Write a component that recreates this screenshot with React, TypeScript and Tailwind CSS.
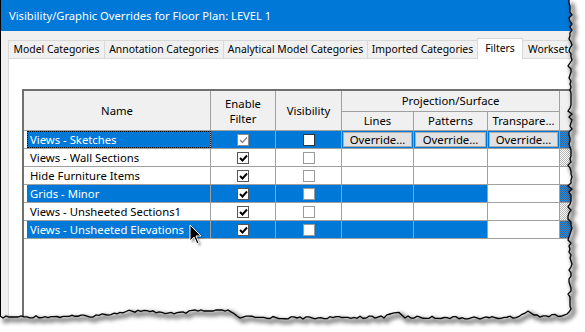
import React from "react";

type Row = {
  name: string;
  sel: boolean;
  dim?: boolean;
  buttons?: boolean;
  tail: "blue" | "gray" | "plain";
};

const ROWS: Row[] = [
  { name: "Views - Sketches", sel: true, dim: true, buttons: true, tail: "blue" },
  { name: "Views - Wall Sections", sel: false, tail: "gray" },
  { name: "Hide Furniture Items", sel: false, tail: "plain" },
  { name: "Grids - Minor", sel: true, tail: "blue" },
  { name: "Views - Unsheeted Sections1", sel: false, tail: "gray" },
  { name: "Views - Unsheeted Elevations", sel: true, tail: "blue" },
];

const TABS = [
  { label: "Model Categories", w: "w-[96px]" },
  { label: "Annotation Categories", w: "w-[119px]" },
  { label: "Analytical Model Categories", w: "w-[144px]" },
  { label: "Imported Categories", w: "w-[110px]" },
];

function noise(i: number) {
  const s = Math.sin(i * 12.9898) * 43758.5453;
  return s - Math.floor(s);
}

function lerp(ctrl: [number, number][], x: number) {
  for (let i = 0; i < ctrl.length - 1; i++) {
    const [x0, y0] = ctrl[i];
    const [x1, y1] = ctrl[i + 1];
    if (x >= x0 && x <= x1) return y0 + ((y1 - y0) * (x - x0)) / (x1 - x0);
  }
  return ctrl[ctrl.length - 1][1];
}

// torn paper outline along the bottom and right edge
function tornPoints() {
  const ctrl: [number, number][] = [
    [0, 317], [20, 317], [95, 316], [115, 313], [130, 311], [160, 312], [175, 314],
    [195, 311], [230, 311], [237, 317], [300, 318], [385, 317], [395, 311], [405, 317],
    [480, 318], [515, 317], [528, 312], [540, 316], [568, 315],
  ];
  const pts: [number, number][] = [];
  for (let x = 0, i = 0; x <= 568; x += 3, i++) {
    pts.push([x, lerp(ctrl, x) + Math.round(noise(i) * 2.4 - 1.2)]);
  }
  for (let y = 312, i = 0; y >= 0; y -= 3, i++) {
    pts.push([570 + Math.round(noise(i + 400) * 4 - 2), y]);
  }
  return pts;
}

function TornEdge() {
  const pts = tornPoints();
  const line = pts.map((p) => p.join(",")).join(" ");
  const shadow = pts.map(([x, y]) => `${x + 3},${y + 3}`).join(" ");
  return (
    <svg className="pointer-events-none absolute left-0 top-0" width={585} height={332}>
      <defs>
        <filter id="blur" x="-10%" y="-10%" width="120%" height="120%">
          <feGaussianBlur stdDeviation="2" />
        </filter>
      </defs>
      <polygon points={`${line} 585,0 585,332 0,332`} fill="#fff" />
      <polyline points={shadow} fill="none" stroke="#000" strokeOpacity="0.55" strokeWidth="4" filter="url(#blur)" />
      <polyline points={line} fill="none" stroke="#000" strokeWidth="1.3" />
    </svg>
  );
}

function Checkbox({ checked, dim, dark }: { checked?: boolean; dim?: boolean; dark?: boolean }) {
  const border = dim ? "border-[#8c8c8c]" : dark ? "border-[#333]" : checked ? "border-[#555]" : "border-[#9a9a9a]";
  return (
    <div className={`flex h-[12px] w-[12px] items-center justify-center border bg-white ${border}`}>
      {checked && (
        <svg width="9" height="8" viewBox="0 0 9 8">
          <path
            d="M1 4 L3.5 6.5 L8 1.5"
            fill="none"
            stroke={dim ? "#7a7a7a" : "#000"}
            strokeWidth={dim ? 1.2 : 1.9}
          />
        </svg>
      )}
    </div>
  );
}

function OverrideButton() {
  return (
    <div className="m-[1px] flex flex-1 items-center justify-center border border-[#adadad] bg-[#e1e1e1] text-black">
      Override...
    </div>
  );
}

function TableRow({ row }: { row: Row }) {
  const blue = row.sel ? "bg-[#0078d7]" : "bg-white";
  const tail =
    row.tail === "blue"
      ? "bg-[repeating-conic-gradient(#0078d7_0%_25%,#5c7a99_0%_50%)] bg-[length:2px_2px]"
      : row.tail === "gray"
        ? "bg-[repeating-conic-gradient(#b4b4b4_0%_25%,#ffffff_0%_50%)] bg-[length:2px_2px]"
        : "bg-white";
  return (
    <div className="flex h-[18px] border-b border-[#a0a0a0]">
      <div className="w-[3px] bg-white" />
      <div
        className={`flex w-[184px] items-center whitespace-nowrap border-r border-[#a0a0a0] pl-[3px] ${blue} ${
          row.sel ? "text-white" : "text-black"
        } ${row.buttons ? "outline-1 -outline-offset-1 outline-dotted outline-black" : ""}`}
      >
        {row.name}
      </div>
      <div className={`flex w-[65px] items-center justify-center border-r border-[#a0a0a0] ${blue}`}>
        <Checkbox checked dim={row.dim} />
      </div>
      <div className={`flex w-[66px] items-center justify-center border-r border-[#a0a0a0] ${blue}`}>
        <Checkbox dark={row.buttons} />
      </div>
      <div className={`flex w-[72px] border-r border-[#a0a0a0] ${blue}`}>{row.buttons && <OverrideButton />}</div>
      <div className={`flex w-[74px] border-r border-[#a0a0a0] ${blue}`}>{row.buttons && <OverrideButton />}</div>
      <div className={`flex w-[72px] border-r border-[#a0a0a0] ${row.buttons ? blue : "bg-white"}`}>
        {row.buttons && <OverrideButton />}
      </div>
      <div className={`flex-1 ${tail}`} />
    </div>
  );
}

function Cursor() {
  return (
    <svg className="pointer-events-none absolute left-[189px] top-[224px]" width="16" height="24" viewBox="-1 -1 16 24">
      <defs>
        <filter id="cs" x="-50%" y="-50%" width="200%" height="200%">
          <feGaussianBlur stdDeviation="1" />
        </filter>
      </defs>
      <path d="M2 2 L2 18 L6 14 L9 21 L11 20 L8 13 L13 13 Z" fill="#000" opacity="0.4" filter="url(#cs)" />
      <path d="M0 0 L0 16 L4 12 L7 19 L9 18 L6 11 L11 11 Z" fill="#000" stroke="#fff" strokeWidth="1" />
    </svg>
  );
}

export default function App() {
  return (
    <div className="relative h-[332px] w-[585px] overflow-hidden bg-white font-['Noto_Sans',sans-serif] text-[11.3px] leading-none text-black">
      <div className="flex h-full w-full flex-col border-l border-black bg-[#f0f0f0]">
        {/* title bar */}
        <div className="flex h-[31px] shrink-0 items-center bg-[#0078d7] pl-[8px] text-[11.2px] text-white">
          Visibility/Graphic Overrides for Floor Plan: LEVEL 1
        </div>

        {/* tabs */}
        <div className="mt-[7px] flex h-[20px] shrink-0 items-end whitespace-nowrap pl-[7px] text-[10.4px]">
          {TABS.map((t) => (
            <div
              key={t.label}
              className={`flex h-[18px] ${t.w} items-center justify-center border-l border-t border-[#d9d9d9] bg-[#f0f0f0]`}
            >
              {t.label}
            </div>
          ))}
          <div className="relative z-10 -mb-[1px] flex h-[21px] w-[46px] items-center justify-center border-x border-t border-[#d9d9d9] bg-white pb-[2px]">
            Filters
          </div>
          <div className="flex h-[18px] flex-1 items-center overflow-hidden border-t border-r border-[#d9d9d9] pl-[5px]">
            Workset
          </div>
        </div>

        {/* tab panel */}
        <div className="ml-[7px] flex min-h-0 flex-1 flex-col border-l border-t border-[#d9d9d9] bg-white pl-[13px] pt-[30px]">
          <div className="flex flex-1 flex-col border-l-2 border-t-2 border-[#707070] bg-white">
            {/* header */}
            <div className="flex h-[40px] border-b border-[#a0a0a0] bg-[#f0f0f0]">
              <div className="flex w-[187px] items-center justify-center border-r border-[#a0a0a0]">Name</div>
              <div className="flex w-[65px] flex-col items-center justify-center border-r border-[#a0a0a0] leading-[15px]">
                <span>Enable</span>
                <span>Filter</span>
              </div>
              <div className="flex w-[66px] items-center justify-center border-r border-[#a0a0a0]">Visibility</div>
              <div className="flex w-[218px] flex-col border-r border-[#a0a0a0]">
                <div className="flex h-[21px] items-center justify-center border-b border-[#a0a0a0]">Projection/Surface</div>
                <div className="flex flex-1">
                  <div className="flex w-[72px] items-center justify-center border-r border-[#a0a0a0]">Lines</div>
                  <div className="flex w-[74px] items-center justify-center border-r border-[#a0a0a0]">Patterns</div>
                  <div className="flex flex-1 items-center justify-center">Transpare...</div>
                </div>
              </div>
              <div className="flex-1" />
            </div>
            {ROWS.map((r) => (
              <TableRow key={r.name} row={r} />
            ))}
          </div>
        </div>
      </div>
      <Cursor />
      <TornEdge />
    </div>
  );
}
